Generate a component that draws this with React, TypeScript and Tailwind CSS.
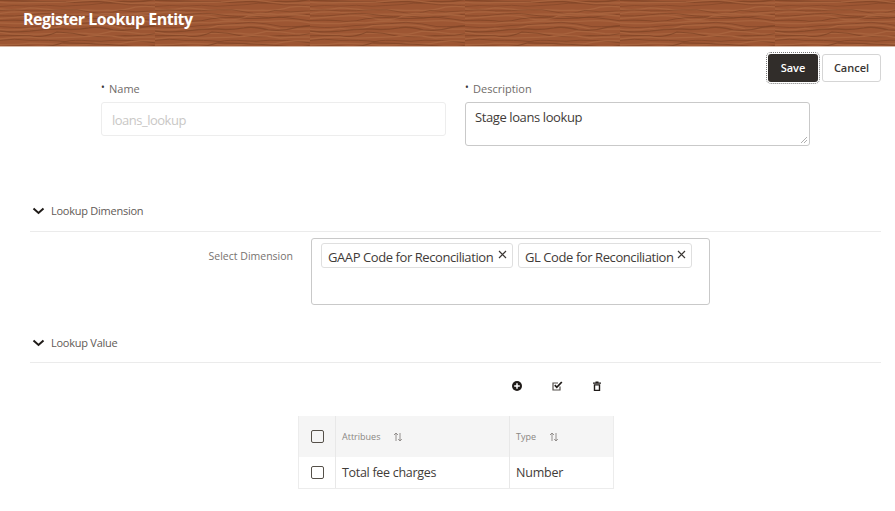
import React from "react";

const font = { fontFamily: '"Open Sans", "Noto Sans", sans-serif' };

function wave(seed: number) {
  let s = seed;
  const r = () => {
    s = (s * 9301 + 49297) % 233280;
    return s / 233280;
  };
  const out: { d: string; w: number; dark: boolean }[] = [];
  let y = 0;
  let i = 0;
  while (y < 47) {
    let cur = y + r() * 2;
    let d = `M-2 ${cur.toFixed(1)}`;
    for (let x = 0; x < 157; x += 24 + Math.floor(r() * 14)) {
      const nx = x + 30;
      const ny = y + (r() - 0.5) * 5;
      d += ` Q${(x + 15).toFixed(0)} ${(cur + (r() - 0.5) * 6).toFixed(1)} ${nx} ${ny.toFixed(1)}`;
      cur = ny;
    }
    const dark = i % 2 === 0;
    out.push({ d, w: dark ? 0.6 + r() * 1 : 1.3, dark });
    y += 1.7 + r() * 1.6;
    i++;
  }
  return out;
}

const lines = wave(73);

function Wood() {
  return (
    <svg className="absolute inset-0 w-full h-full" aria-hidden="true">
      <defs>
        <pattern id="wood" width="155" height="46" patternUnits="userSpaceOnUse">
          <rect width="155" height="46" fill="#9d5633" />
          {lines.map((l, i) => (
            <path
              key={i}
              d={l.d}
              fill="none"
              stroke={l.dark ? "#7c4224" : "#a8633d"}
              strokeWidth={l.w}
              opacity={l.dark ? 0.7 : 1}
            />
          ))}
        </pattern>
      </defs>
      <rect width="100%" height="100%" fill="url(#wood)" />
    </svg>
  );
}

function Chevron() {
  return (
    <svg width="13" height="8" viewBox="0 0 13 8" className="shrink-0">
      <path d="M1.5 1.5 L6.5 6 L11.5 1.5" fill="none" stroke="#1f1b18" strokeWidth="2" />
    </svg>
  );
}

function Section({ title, h }: { title: string; h: string }) {
  return (
    <div className={`ml-[30px] mr-[14px] border-b border-[#ebebeb] ${h} pl-[2px] flex items-start gap-[6px]`}>
      <span className="mt-[4px]"><Chevron /></span>
      <span className="text-[11px] leading-[15px] text-[#5f5a56] tracking-[-0.25px]">{title}</span>
    </div>
  );
}

function Label({ text }: { text: string }) {
  return (
    <div className="flex items-start h-[19px]">
      <span className="text-[10px] leading-[8px] text-[#333] w-[8px]">•</span>
      <span className="text-[11px] leading-[15px] -mt-[2px] text-[#6f6b68]">{text}</span>
    </div>
  );
}

function Chip({ text, w }: { text: string; w: string }) {
  return (
    <div className={`${w} h-[25px] border border-[#dfdfdf] rounded-[3px] pl-[6px] pr-[5px] flex items-center justify-between`}>
      <span className="text-[13px] leading-[18px] mt-[2px] text-[#3f3b38] whitespace-nowrap tracking-[-0.42px]">{text}</span>
      <svg width="9" height="9" viewBox="0 0 9 9" className="mb-[2px] shrink-0">
        <path d="M1 1 L8 8 M8 1 L1 8" stroke="#3a3633" strokeWidth="1.2" />
      </svg>
    </div>
  );
}

function Check() {
  return <div className="w-[13px] h-[13px] border-[1.5px] border-[#555049] rounded-[2px]" />;
}

function Sort() {
  return (
    <svg width="10" height="10" viewBox="0 0 10 10" className="shrink-0">
      <path d="M3 9 V1 M1 3 L3 1 L5 3 M7 1 V9 M5.2 7 L7 9 L8.8 7" fill="none" stroke="#8a8683" strokeWidth="0.9" />
    </svg>
  );
}

export default function App() {
  return (
    <div className="w-[895px] h-[511px] bg-white overflow-hidden" style={font}>
      <header className="relative h-[47px] border-b border-[#d9b9a6] flex items-center pl-[23px] pb-[9px]">
        <Wood />
        <h1 className="relative text-white font-bold text-[16px] leading-[20px] tracking-[-0.5px]">Register Lookup Entity</h1>
      </header>

      <div className="h-[7px]" />
      <div className="flex justify-end gap-[4px] pr-[14px] h-[28px]">
        <button className="w-[50px] h-[28px] rounded-[3px] bg-[#312d2a] text-white text-[11px] font-semibold outline-1 outline-dotted outline-offset-1 outline-[#777]">Save</button>
        <button className="w-[59px] h-[28px] rounded-[3px] bg-white border border-[#d5d5d5] text-[#3a3633] text-[11px] font-semibold">Cancel</button>
      </div>

      <div className="flex items-start pl-[101px] gap-[19px] mt-[1px]">
        <div className="w-[345px]">
          <Label text="Name" />
          <div className="h-[34px] border border-[#ededed] rounded-[3px] flex items-center pl-[10px] pt-[4px] text-[13px] tracking-[-0.5px] text-[#c9c7c5]">loans_lookup</div>
        </div>
        <div className="w-[345px]">
          <Label text="Description" />
          <div className="h-[44px] border border-[#c9c9c9] rounded-[3px] pl-[9px] pt-[5px] text-[13px] leading-[18px] tracking-[-0.4px] text-[#3f3b38] relative">
            Stage loans lookup
            <svg width="8" height="8" viewBox="0 0 8 8" className="absolute right-[1px] bottom-[1px]">
              <path d="M1 7 L7 1 M4 7 L7 4" stroke="#9a9a9a" strokeWidth="0.8" />
            </svg>
          </div>
        </div>
      </div>

      <div className="h-[57px]" />
      <Section title="Lookup Dimension" h="h-[29px]" />

      <div className="flex items-start mt-[6px] h-[67px]">
        <div className="w-[293px] text-right text-[10.5px] font-medium leading-[15px] text-[#77726f] pt-[11px]">Select Dimension</div>
        <div className="ml-[18px] w-[399px] h-[67px] border border-[#c9c9c9] rounded-[3px] pl-[9px] pt-[4px] flex items-start gap-[5px]">
          <Chip text="GAAP Code for Reconciliation" w="w-[192px]" />
          <Chip text="GL Code for Reconciliation" w="w-[174px]" />
        </div>
      </div>

      <div className="h-[30px]" />
      <Section title="Lookup Value" h="h-[28px]" />

      <div className="flex items-center h-[12px] mt-[17px] pl-[512px] gap-[30px]">
        <svg width="10" height="10" viewBox="0 0 10 10">
          <circle cx="5" cy="5" r="5" fill="#1f1b18" />
          <path d="M5 2.2 V7.8 M2.2 5 H7.8" stroke="#fff" strokeWidth="1.5" />
        </svg>
        <svg width="11" height="10" viewBox="0 0 11 10">
          <path d="M8 5.5 V9 H1 V2 H6" fill="none" stroke="#55504c" strokeWidth="1.2" />
          <path d="M2.8 4.2 L4.8 6.3 L9.8 1" fill="none" stroke="#1f1b18" strokeWidth="1.8" />
        </svg>
        <svg width="10" height="10" viewBox="0 0 10 10" className="-ml-[1px]">
          <path d="M3.5 0.5 H6.5 V1.5 H9 V2.8 H1 V1.5 H3.5 Z" fill="#1f1b18" />
          <path d="M1.8 3.3 H8.2 V10 H1.8 Z M3.2 4.5 V8.8 H6.8 V4.5 Z" fill="#1f1b18" fillRule="evenodd" />
        </svg>
      </div>

      <div className="ml-[298px] mt-[24px] w-[316px] border border-[#ececec] border-t-0">
        <div className="grid grid-cols-[37px_174px_1fr] h-[41px] bg-[#f5f5f5]">
          <div className="flex items-center pl-[12px] pb-[1px] border-r border-[#e8e8e8]"><Check /></div>
          <div className="flex items-center pl-[6px] gap-[13px] border-r border-[#e8e8e8] text-[9px] text-[#8a8683]">
            <span>Attribues</span><Sort />
          </div>
          <div className="flex items-center pl-[6px] gap-[13px] text-[9px] text-[#8a8683]">
            <span>Type</span><Sort />
          </div>
        </div>
        <div className="grid grid-cols-[37px_174px_1fr] h-[31px]">
          <div className="flex items-center pl-[12px] pb-[1px] border-r border-[#e8e8e8]"><Check /></div>
          <div className="flex items-center pl-[6px] pt-[1px] border-r border-[#e8e8e8] text-[12.5px] tracking-[-0.3px] text-[#3f3b38]">Total fee charges</div>
          <div className="flex items-center pl-[6px] pt-[1px] text-[12.5px] tracking-[-0.2px] text-[#3f3b38]">Number</div>
        </div>
      </div>
    </div>
  );
}
